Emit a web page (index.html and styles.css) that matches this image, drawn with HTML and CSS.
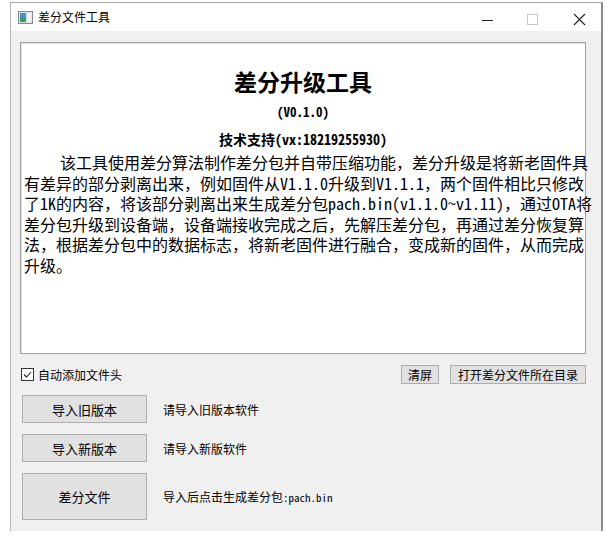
FILE: index.html
```html
<!DOCTYPE html>
<html lang="zh-CN">
<head>
    <meta charset="UTF-8">
    <title>差分文件工具</title>
    <link rel="stylesheet" href="styles.css">
</head>
<body>
    <div class="window">
        <div class="titlebar">
            <svg class="app_icon" width="15" height="13" viewBox="0 0 15 13">
                <rect x="0.5" y="0.5" width="14" height="12" fill="#dfe6ee" stroke="#7d8a99"/>
                <rect x="2" y="2" width="6" height="9" fill="#3a9a6a"/>
                <rect x="2" y="2" width="6" height="4" fill="#4d8fd0"/>
                <rect x="9.5" y="2" width="3.5" height="9" fill="#f4f6f8"/>
            </svg>
            <span class="window_title">差分文件工具</span>
            <div class="controls">
                <svg width="46" height="28" viewBox="0 0 46 28"><path d="M18 17.5h11" stroke="#222" stroke-width="1"/></svg>
                <svg width="46" height="28" viewBox="0 0 46 28"><rect x="17.5" y="11.5" width="10" height="10" fill="none" stroke="#c8c8c8"/></svg>
                <svg width="46" height="28" viewBox="0 0 46 28"><path d="M18 11l11 11M29 11l-11 11" stroke="#222" stroke-width="1.1"/></svg>
            </div>
        </div>

        <div class="client">
            <div class="log_box">
                <div class="log_title">差分升级工具</div>
                <div class="log_version">(V0.1.0)</div>
                <div class="log_support">技术支持(vx:18219255930)</div>
                <div class="log_text">
                    <div class="line first">该工具使用差分算法制作差分包并自带压缩功能，差分升级是将新老固件具</div>
                    <div class="line">有差异的部分剥离出来，例如固件从V1.1.0升级到V1.1.1，两个固件相比只修改</div>
                    <div class="line">了1K的内容，将该部分剥离出来生成差分包pach.bin(v1.1.0~v1.11)，通过OTA将</div>
                    <div class="line">差分包升级到设备端，设备端接收完成之后，先解压差分包，再通过差分恢复算</div>
                    <div class="line">法，根据差分包中的数据标志，将新老固件进行融合，变成新的固件，从而完成</div>
                    <div class="line">升级。</div>
                </div>
            </div>

            <div class="toolbar">
                <label class="check_label">
                    <span class="check_box">
                        <svg width="11" height="11" viewBox="0 0 11 11"><path d="M2 5.5l2.5 2.5 4.5-5" fill="none" stroke="#222" stroke-width="1.1"/></svg>
                    </span>
                    自动添加文件头
                </label>
                <div class="toolbar_buttons">
                    <button class="small_btn clear_btn" type="button">清屏</button>
                    <button class="small_btn open_btn" type="button">打开差分文件所在目录</button>
                </div>
            </div>

            <div class="action_row">
                <button class="action_btn" type="button">导入旧版本</button>
                <span class="action_info">请导入旧版本软件</span>
            </div>
            <div class="action_row">
                <button class="action_btn" type="button">导入新版本</button>
                <span class="action_info">请导入新版软件</span>
            </div>
            <div class="action_row tall">
                <button class="action_btn" type="button">差分文件</button>
                <span class="action_info">导入后点击生成差分包<span class="mono">:pach.bin</span></span>
            </div>
        </div>
    </div>
</body>
</html>
```

FILE: styles.css
```css
body {
    margin: 0;
    background: #ffffff;
    font-family: "Noto Sans CJK SC", "Noto Sans", sans-serif;
    color: #000000;
}

.window {
    margin: 2px 0 0 10px;
    width: 593px;
    box-sizing: border-box;
    border-top: 1px solid #a9a9a9;
    border-left: 1px solid #b4b4b4;
    border-right: 2px solid #8c8c8c;
}

.titlebar {
    height: 28px;
    display: flex;
    align-items: center;
    background: #ffffff;
}
.app_icon {
    margin-left: 7px;
    margin-top: 1px;
}
.window_title {
    margin-left: 5px;
    font-size: 12px;
    line-height: 28px;
}
.controls {
    margin-left: auto;
    display: flex;
    margin-right: -1px;
}

.client {
    background: #f0f0f0;
    height: 500px;
    box-sizing: border-box;
    padding: 11px 0 11px 0;
}

.log_box {
    margin-left: 9px;
    width: 566px;
    height: 312px;
    box-sizing: border-box;
    background: #ffffff;
    border: 1px solid #a0a0a0;
    box-shadow: inset 1px 1px 0 #e2e2e2;
    padding: 23px 0 0 3px;
}
.log_title {
    text-align: center;
    font-size: 23px;
    font-weight: bold;
    line-height: 30px;
    padding-right: 3px;
}
.log_version {
    margin-top: 6px;
    text-align: center;
    font-family: "Noto Sans Mono CJK SC", "Noto Sans CJK SC", monospace;
    font-size: 13px;
    font-weight: bold;
    line-height: 20px;
    padding-right: 3px;
}
.log_support {
    margin-top: 7px;
    text-align: center;
    font-family: "Noto Sans Mono CJK SC", "Noto Sans CJK SC", monospace;
    font-size: 14px;
    font-weight: bold;
    line-height: 20px;
    padding-right: 3px;
}
.log_text {
    margin-top: 3px;
    font-family: "Noto Sans Mono CJK SC", "Noto Sans CJK SC", monospace;
    font-size: 16px;
    line-height: 20.6px;
}
.line {
    white-space: nowrap;
}
.line.first {
    text-indent: 36px;
}

.toolbar {
    margin: 11px 15px 0 10px;
    height: 19px;
    display: flex;
    align-items: center;
}
.check_label {
    display: flex;
    align-items: center;
    font-size: 12px;
    gap: 4px;
}
.check_box {
    width: 11px;
    height: 11px;
    border: 1px solid #333333;
    background: #ffffff;
    display: flex;
}
.toolbar_buttons {
    margin-left: auto;
    display: flex;
    gap: 11px;
}
.small_btn {
    height: 19px;
    padding: 0;
    font-family: inherit;
    font-size: 12px;
    background: #e1e1e1;
    border: 1px solid #adadad;
    color: #000000;
}
.clear_btn {
    width: 38px;
}
.open_btn {
    width: 136px;
}

.action_row {
    margin: 11px 0 0 11px;
    height: 28px;
    display: flex;
    align-items: center;
}
.action_row.tall {
    height: 47px;
}
.action_btn {
    width: 125px;
    height: 100%;
    padding: 0;
    font-family: inherit;
    font-size: 13px;
    background: #e1e1e1;
    border: 1px solid #adadad;
    color: #000000;
}
.action_info {
    margin-left: 16px;
    font-size: 12px;
}
.mono {
    font-family: "Noto Sans Mono CJK SC", "Liberation Mono", monospace;
    font-size: 11px;
}
```
